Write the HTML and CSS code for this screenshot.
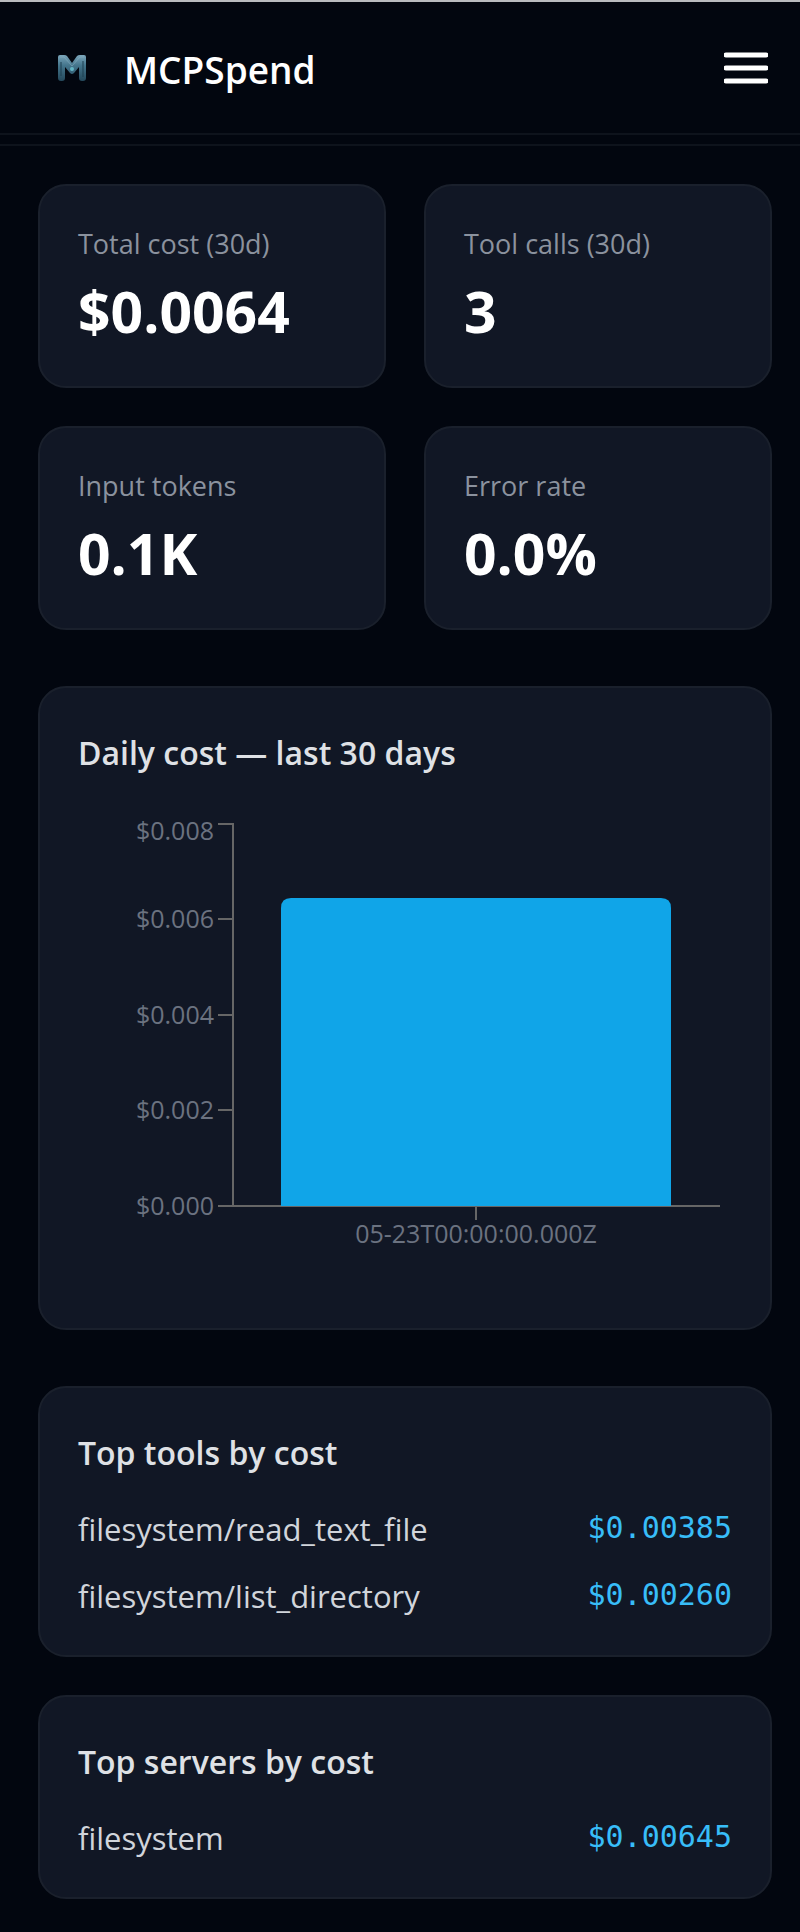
FILE: index.html
```html
<!DOCTYPE html>
<html lang="en">

<head>
    <meta charset="utf-8">
    <title>MCPSpend</title>
    <meta name="viewport" content="width=device-width, initial-scale=1">
    <link rel="stylesheet" href="styles.css">
</head>

<body>

  <header class="topbar">
    <a class="brand" href="#">
      <svg class="logo" viewBox="0 0 32 28" aria-hidden="true">
        <defs>
          <linearGradient id="logoFill" x1="0" y1="0" x2="0" y2="1">
            <stop offset="0" stop-color="#7ba6bb"/>
            <stop offset="0.4" stop-color="#44758c"/>
            <stop offset="1" stop-color="#24485b"/>
          </linearGradient>
        </defs>
        <path d="M2 3q0-2 2-2h4q2 0 3 1l5 7 5-7q1-1 3-1h4q2 0 2 2v21q0 3-3 3h-1q-3 0-3-3V13l-5 6q-2 2-4 0l-5-6v11q0 3-3 3H5q-3 0-3-3z" fill="url(#logoFill)"/>
        <path d="M4 3h4l8 9 8-9h4" fill="none" stroke="#8db4c4" stroke-width="1" opacity="0.5"/>
        <path d="M5 8v14M27 7v16" fill="none" stroke="#1c3d50" stroke-width="2" opacity="0.5"/>
        <circle cx="16" cy="15" r="2" fill="#62b5c4"/>
      </svg>
      <span class="brand-name">MCPSpend</span>
    </a>
    <button class="menu-button" type="button" aria-label="Open menu">
      <svg class="menu-icon" viewBox="0 0 44 32" aria-hidden="true">
        <path d="M2 3h40M2 16h40M2 29h40" stroke="#fff" stroke-width="5" stroke-linecap="round"/>
      </svg>
    </button>
  </header>

  <main class="dashboard">

    <section class="stats">
      <div class="card">
        <p class="stat-label">Total cost (30d)</p>
        <p class="stat-value">$0.0064</p>
      </div>
      <div class="card">
        <p class="stat-label">Tool calls (30d)</p>
        <p class="stat-value">3</p>
      </div>
      <div class="card">
        <p class="stat-label">Input tokens</p>
        <p class="stat-value">0.1K</p>
      </div>
      <div class="card">
        <p class="stat-label">Error rate</p>
        <p class="stat-value">0.0%</p>
      </div>
    </section>

    <section class="card">
      <h2 class="card-title">Daily cost — last 30 days</h2>
      <svg class="chart" viewBox="0 0 654 478" role="img" aria-label="Daily cost">
        <!-- axes -->
        <path class="axis" d="M140 12h15v382M140 107h15M140 203h15M140 298h15M140 394h502M398 394v14"/>
        <path class="bar" d="M203 394V96q0-10 10-10h370q10 0 10 10v298z"/>
        <g class="tick tick-y">
          <text x="136" y="28">$0.008</text>
          <text x="136" y="116">$0.006</text>
          <text x="136" y="212">$0.004</text>
          <text x="136" y="307">$0.002</text>
          <text x="136" y="403">$0.000</text>
        </g>
        <text class="tick tick-x" x="398" y="431">05-23T00:00:00.000Z</text>
      </svg>
    </section>

    <div class="breakdown">
      <section class="card">
        <h2 class="card-title">Top tools by cost</h2>
        <ul class="cost-list">
          <li class="cost-row"><span>filesystem/read_text_file</span><span class="amount">$0.00385</span></li>
          <li class="cost-row"><span>filesystem/list_directory</span><span class="amount">$0.00260</span></li>
        </ul>
      </section>
      <section class="card">
        <h2 class="card-title">Top servers by cost</h2>
        <ul class="cost-list">
          <li class="cost-row"><span>filesystem</span><span class="amount">$0.00645</span></li>
        </ul>
      </section>
    </div>

  </main>

</body>

</html>
```
FILE: styles.css
```css
* {
  box-sizing: border-box;
}

body {
  margin: 0;
  border-top: 2px solid #b9bbbe;
  background-color: #02060f;
  color: #d1d5db;
  font-family: "Segoe UI", "Open Sans", "Noto Sans", sans-serif;
}

h2,
p,
ul {
  margin: 0;
  padding: 0;
}

.topbar {
  display: flex;
  justify-content: space-between;
  align-items: center;
  height: 133px;
  padding: 0 32px 0 56px;
  border-bottom: 2px solid #0e131c;
}

.brand {
  display: flex;
  align-items: center;
  gap: 36px;
  color: #fff;
  text-decoration: none;
}

.logo {
  width: 32px;
  height: 28px;
}

.brand-name {
  padding-top: 4px;
  font-size: 37px;
  line-height: 48px;
  font-weight: 600;
}

.menu-button {
  padding: 0;
  border: none;
  background: none;
  cursor: pointer;
}

.menu-icon {
  display: block;
  width: 44px;
  height: 32px;
}

.dashboard {
  display: flex;
  flex-direction: column;
  gap: 56px;
  margin-top: 9px;
  padding: 38px 28px 33px 38px;
  border-top: 2px solid #0e131c;
}

.stats {
  display: grid;
  grid-template-columns: 1fr 1fr;
  gap: 38px;
}

.breakdown {
  display: flex;
  flex-direction: column;
  gap: 38px;
}

.card {
  padding: 38px;
  border: 2px solid #1a202c;
  border-radius: 28px;
  background-color: #111725;
}

.stat-label {
  color: #8b929e;
  font-size: 27px;
  line-height: 40px;
}

.stat-value {
  margin-top: 10px;
  color: #fff;
  font-size: 57px;
  line-height: 74px;
  font-weight: 700;
}

.card-title {
  margin-bottom: 32px;
  color: #dfe1e5;
  font-size: 32px;
  line-height: 54px;
  font-weight: 600;
}

.chart {
  display: block;
  width: 100%;
  height: auto;
}

.axis {
  fill: none;
  stroke: #666;
  stroke-width: 2;
}

.bar {
  fill: #10a5e8;
}

.tick {
  fill: #6b7280;
  font-size: 25px;
}

.tick-y {
  text-anchor: end;
}

.tick-x {
  text-anchor: middle;
}

.cost-list {
  display: flex;
  flex-direction: column;
  gap: 29px;
  list-style: none;
}

.cost-row {
  display: flex;
  justify-content: space-between;
  align-items: flex-start;
  padding-bottom: 4px;
  font-size: 31px;
  line-height: 34px;
}

.amount {
  color: #38bdf8;
  font-family: Consolas, "DejaVu Sans Mono", monospace;
  font-size: 30px;
  line-height: 32px;
}
```
